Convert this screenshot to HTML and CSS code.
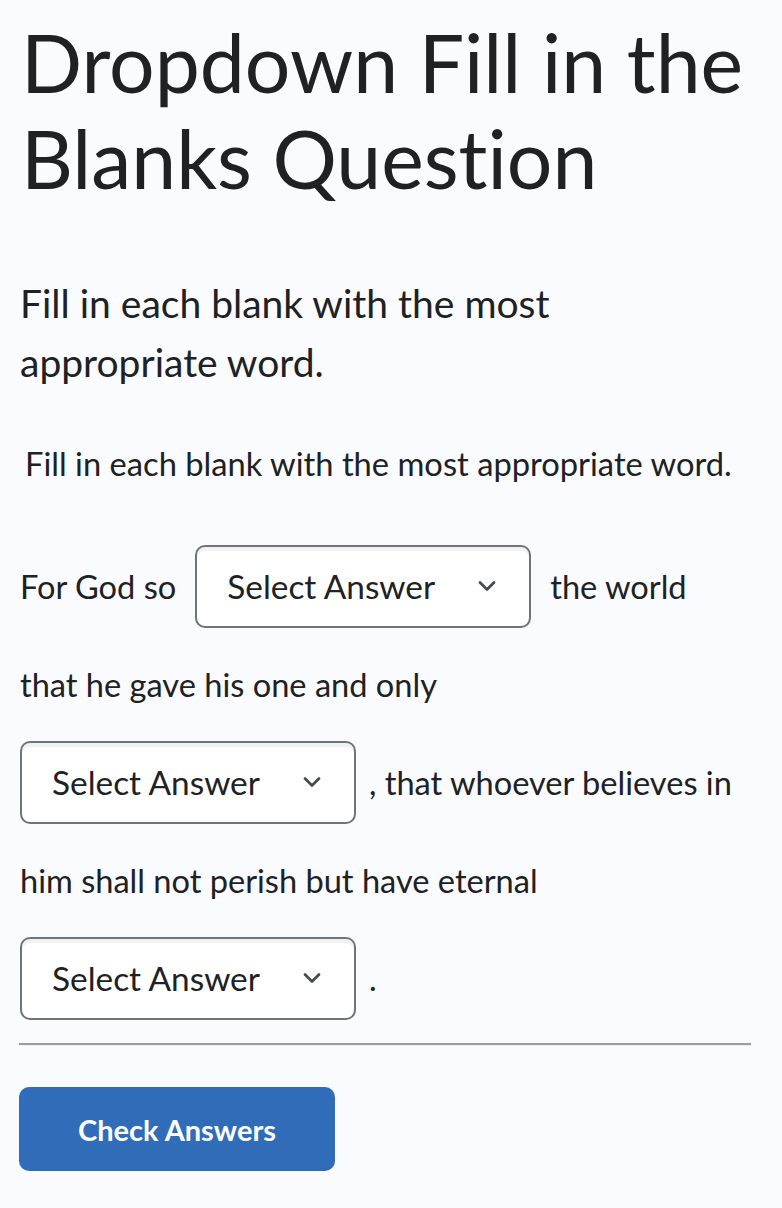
FILE: index.html
```html
<!doctype html>

<html lang="en">
  <head>
    <meta charset="utf-8">
    <title>Dropdown Fill in the Blanks Question</title>
    <link rel="stylesheet" href="styles.css">
  </head>

  <body>
    <h1 class="title">Dropdown Fill in the Blanks Question</h1>
    <p class="intro">Fill in each blank with the most appropriate word.</p>
    <p class="stem">Fill in each blank with the most appropriate word.</p>

    <div class="question">
      <div class="row">
        <span>For God so</span>
        <div class="blank" role="combobox" tabindex="0">
          <span>Select Answer</span>
          <svg class="chev" viewBox="0 0 18 12" width="18" height="12"><path d="M2 2.5l7 7 7-7" fill="none" stroke="#494c4e" stroke-width="2.8" stroke-linecap="round" stroke-linejoin="round"/></svg>
        </div>
        <span>the world</span>
      </div>
      <div class="row">
        <span>that he gave his one and only</span>
      </div>
      <div class="row tight">
        <div class="blank" role="combobox" tabindex="0">
          <span>Select Answer</span>
          <svg class="chev" viewBox="0 0 18 12" width="18" height="12"><path d="M2 2.5l7 7 7-7" fill="none" stroke="#494c4e" stroke-width="2.8" stroke-linecap="round" stroke-linejoin="round"/></svg>
        </div>
        <span>, that whoever believes in</span>
      </div>
      <div class="row">
        <span>him shall not perish but have eternal</span>
      </div>
      <div class="row tight">
        <div class="blank" role="combobox" tabindex="0">
          <span>Select Answer</span>
          <svg class="chev" viewBox="0 0 18 12" width="18" height="12"><path d="M2 2.5l7 7 7-7" fill="none" stroke="#494c4e" stroke-width="2.8" stroke-linecap="round" stroke-linejoin="round"/></svg>
        </div>
        <span>.</span>
      </div>
    </div>

    <hr class="rule">

    <button class="check" type="button">Check Answers</button>
  </body>
</html>
```

FILE: styles.css
```css
:root {
  --bg: #f9fbff;
  --text: #202122;
  --border: #6e7477;
  --primary: #306cb8;
}

html {
  background: var(--bg);
  font-family: Lato, "Noto Sans", sans-serif;
  font-variant-ligatures: no-common-ligatures;
  color: var(--text);
}

body {
  margin: 0;
  padding: 14px 31px 0 20px;
}

.title {
  font-size: 80.5px;
  font-weight: 400;
  line-height: 96px;
  margin: 0;
  padding-left: 1px;
}

.intro {
  font-size: 39px;
  line-height: 59px;
  margin: 68px 0 0;
  max-width: 560px;
}

.stem {
  font-size: 32.7px;
  line-height: 40px;
  margin: 52px 0 0 5px;
}

.question {
  margin-top: 53px;
  font-size: 32.6px;
}

.row {
  display: flex;
  align-items: center;
  gap: 19px;
  height: 98px;
}

.row.tight {
  gap: 13px;
}

.blank {
  box-sizing: border-box;
  display: flex;
  align-items: center;
  justify-content: space-between;
  width: 336px;
  height: 83px;
  padding: 0 33px 0 30px;
  font-size: 33.4px;
  background: #fff;
  border: 2px solid var(--border);
  border-radius: 10px;
  box-shadow: inset 0 4px 0 0 rgba(181, 189, 194, 0.2);
}

.chev {
  display: block;
}

.rule {
  margin: 16px 0 0 -1px;
  border: 0;
  border-top: 2px solid #9c9c9c;
  border-bottom: 1px solid #eceef2;
  height: 0;
}

.check {
  display: block;
  margin: 41px 0 0 -1px;
  width: 316px;
  height: 84px;
  border: 0;
  border-radius: 10px;
  background: var(--primary);
  color: #fff;
  font-family: inherit;
  font-size: 29px;
  font-weight: 700;
}
```
